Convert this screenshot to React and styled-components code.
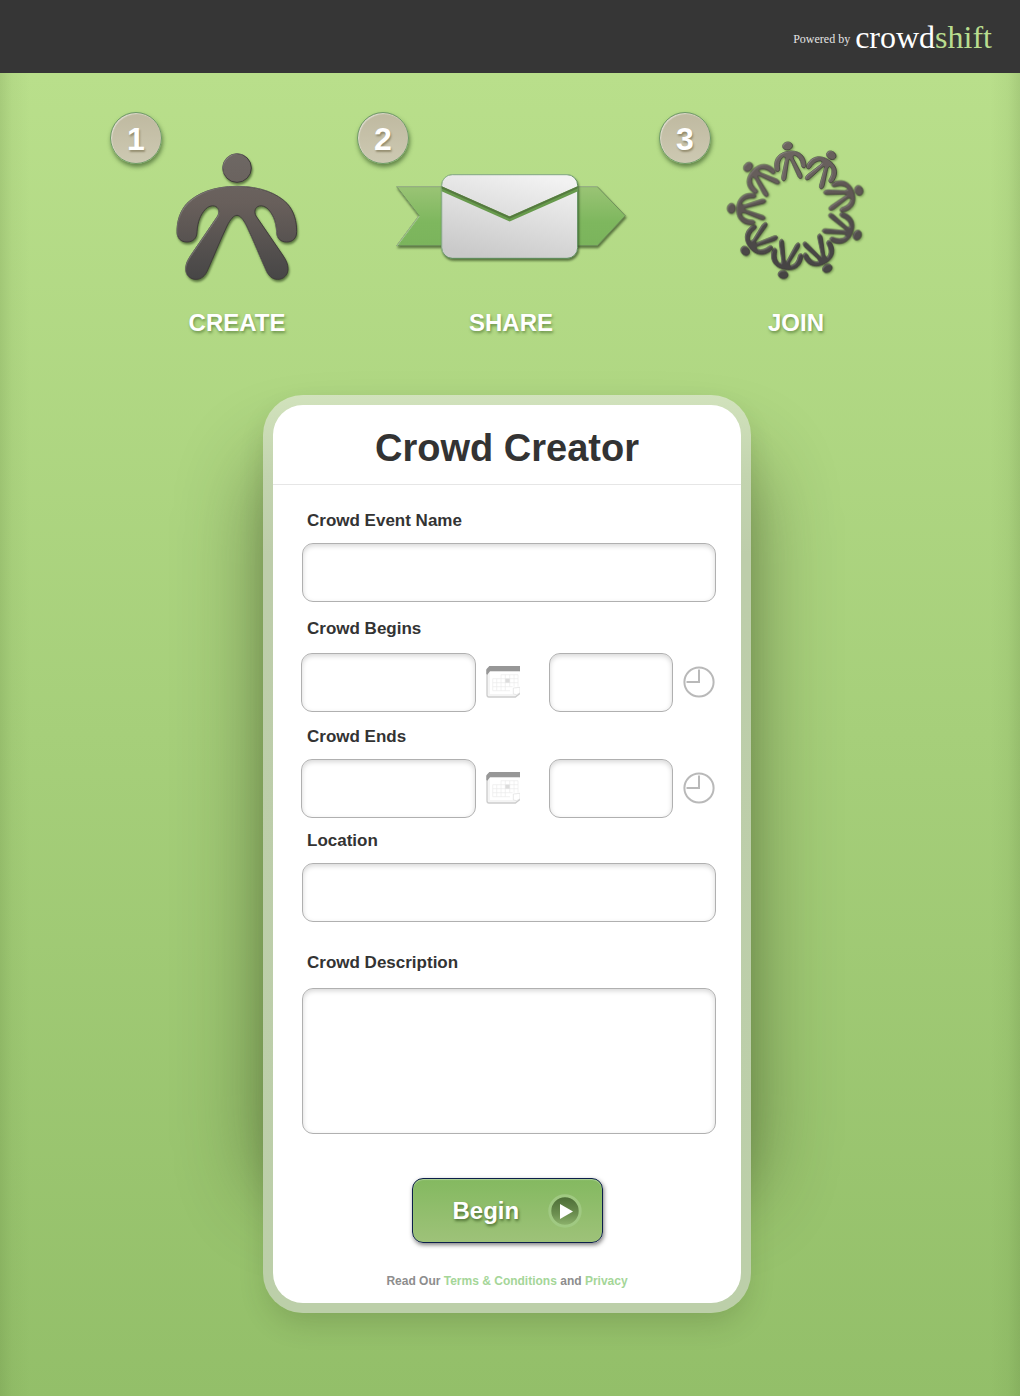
import React from "react";
import styled, { createGlobalStyle } from "styled-components";

const GlobalStyle = createGlobalStyle`
  * { box-sizing: border-box; }
  body {
    margin: 0;
    background: #93bf69;
    font-family: "Liberation Sans", Arial, Helvetica, sans-serif;
    color: #333;
  }
`;

const TopBar = styled.header`
  display: flex;
  justify-content: flex-end;
  align-items: center;
  gap: 5px;
  height: 73px;
  padding: 0 28px 0 0;
  background: #363636;
  color: #fff;
  font-family: "Liberation Serif", "Times New Roman", serif;
`;

const PoweredBy = styled.span`
  padding-top: 6px;
  font-size: 12px;
  color: #e4e4e4;
`;

const Brand = styled.a`
  font-size: 32px;
  line-height: 36px;
  color: #fff;
  text-decoration: none;
  span { color: #b9dd8f; }
`;

const Stage = styled.main`
  padding: 39px 6px 83px 0;
  background:
    linear-gradient(90deg, rgba(70, 100, 40, 0.16), rgba(70, 100, 40, 0.05) 12px, transparent 30px),
    linear-gradient(270deg, rgba(70, 100, 40, 0.16), rgba(70, 100, 40, 0.05) 12px, transparent 30px),
    linear-gradient(#b9df8b, #93bf69);
`;

const Steps = styled.ol`
  display: grid;
  grid-template-columns: 247px 302px 1fr;
  max-width: 794px;
  margin: 0 auto;
  padding: 0;
  list-style: none;
`;

const Step = styled.li`
  display: flex;
  align-items: flex-start;
`;

const Badge = styled.span`
  flex: none;
  width: 52px;
  height: 52px;
  border: 1px solid #6f9a68;
  border-radius: 50%;
  background: linear-gradient(#bfb9a0, #cdc9b2);
  box-shadow: 1px 3px 4px rgba(30, 60, 20, 0.55), inset 1px 1px 1px rgba(255, 255, 255, 0.45);
  color: #fff;
  font-size: 32px;
  font-weight: bold;
  line-height: 52px;
  text-align: center;
  text-shadow: 1px 2px 2px rgba(70, 60, 20, 0.4);
`;

const StepBody = styled.div`
  display: flex;
  flex-direction: column;
  align-items: center;
  margin-left: ${(p) => (p.$overlap ? "-16px" : "16px")};
`;

const StepArt = styled.svg`
  display: block;
  width: ${(p) => p.$width}px;
  height: 190px;
  overflow: visible;
`;

const StepTitle = styled.h2`
  margin: 7px 0 0;
  font-size: 24px;
  line-height: 28px;
  color: #fff;
  text-shadow: 1px 2px 3px rgba(40, 80, 20, 0.5);
`;

const Frame = styled.section`
  position: relative;
  isolation: isolate;
  width: 100%;
  max-width: 488px;
  margin: 58px auto 0;
  padding: 10px;
  border-radius: 40px;
  box-shadow: 0 14px 30px -6px rgba(40, 50, 20, 0.2);

  &::before {
    content: "";
    position: absolute;
    z-index: -2;
    inset: 70px 0 120px;
    border-radius: 40px;
    box-shadow: 0 0 80px 6px rgba(40, 50, 20, 0.44);
  }

  &::after {
    content: "";
    position: absolute;
    z-index: -1;
    inset: 0;
    border-radius: 40px;
    background: linear-gradient(#d1e2bc, #c3d4af 80px, #bdcdaa 160px, #bccfa9);
  }
`;

const Card = styled.form`
  border-radius: 30px;
  background: #fff;
`;

const CardTitle = styled.h1`
  margin: 0;
  padding-top: 21px;
  height: 80px;
  border-bottom: 1px solid #e6e6e6;
  font-size: 38px;
  line-height: 44px;
  text-align: center;
`;

const Fields = styled.div`
  padding: 26px 25px 0 29px;
`;

const Field = styled.div`
  display: flex;
  flex-direction: column;
  gap: ${(p) => p.$gap || 12}px;
  margin-top: ${(p) => p.$top || 0}px;
`;

const Label = styled.label`
  padding-left: 5px;
  font-size: 17px;
  font-weight: bold;
  line-height: 20px;
`;

const boxStyle = `
  display: block;
  width: 100%;
  border: 1px solid #b0b0b0;
  border-radius: 11px;
  background: #fff;
  box-shadow: inset 0 2px 5px rgba(0, 0, 0, 0.16);
  padding: 0 14px;
  font: inherit;
  font-size: 18px;
  color: #333;
  outline: none;
  &:focus { border-color: #7bae57; }
`;

const TextBox = styled.input`
  ${boxStyle}
  height: 59px;
`;

const TextArea = styled.textarea`
  ${boxStyle}
  height: 146px;
  padding: 14px;
  resize: none;
`;

const Split = styled.div`
  display: flex;
  justify-content: space-between;
  margin: 0 1px 0 -1px;
`;

const Picker = styled.div`
  display: flex;
  align-items: center;
  gap: 10px;
  width: ${(p) => p.$width}px;
`;

const IconButton = styled.button`
  flex: none;
  padding: 0 0 2px;
  border: 0;
  background: none;
  cursor: pointer;
  svg { display: block; }
`;

const BeginButton = styled.button`
  display: flex;
  align-items: center;
  justify-content: space-between;
  width: 191px;
  height: 65px;
  margin: 44px auto 0;
  padding: 0 20px 0 40px;
  border: 1px solid #0c1f4a;
  border-radius: 11px;
  background: linear-gradient(#84b960, #9ec279);
  box-shadow: 1px 2px 4px rgba(0, 0, 0, 0.5), inset 0 1px 1px rgba(255, 255, 255, 0.35);
  color: #fff;
  font: inherit;
  font-size: 24px;
  font-weight: bold;
  text-shadow: 1px 2px 3px rgba(30, 60, 10, 0.6);
  cursor: pointer;
`;

const Legal = styled.p`
  margin: 0;
  padding: 30px 0 14px;
  font-size: 12px;
  font-weight: bold;
  line-height: 16px;
  color: #8d8d8d;
  text-align: center;
  a { color: #a5d698; text-decoration: none; }
`;

const BODY =
  "M411 259C481 259 531 280 561 310C583 334 590 365 590 395C590 415 578 426 560 426C542 426 530 415 530 395C528 365 520 345 505 328C497 319 485 316 478 318C465 321 461 335 468 348L548 465C558 480 564 492 564 506C564 526 550 538 533 538C517 538 505 527 498 510C480 470 460 420 440 378C430 358 420 346 411 346C401 346 391 358 381 378C361 420 341 470 323 510C316 527 304 538 288 538C271 538 257 526 257 506C257 492 263 480 273 465L353 348C360 335 356 321 343 318C336 316 324 319 316 328C301 345 293 365 291 395C291 415 279 426 261 426C243 426 231 415 231 395C231 365 239 334 261 310C291 280 341 259 411 259Z";

const SMALL_BODY =
  "M0 -180C25 -180 47 -167 47 -137C47 -128 44 -124 40 -124C35 -124 33 -128 33 -134C33 -150 26 -161 17 -165C12 -166 11 -161 13 -154L30 -108C32 -100 30 -95 27 -94C23 -93 20 -96 18 -101L4 -149C2 -154 1 -156 0 -156C-1 -156 -2 -154 -4 -149L-18 -101C-20 -96 -23 -93 -27 -94C-30 -95 -32 -100 -30 -108L-13 -154C-11 -161 -12 -166 -17 -165C-26 -161 -33 -150 -33 -134C-33 -128 -35 -124 -40 -124C-44 -124 -47 -128 -47 -137C-47 -167 -25 -180 0 -180Z";

function Bevel({ id, depth = 4, light = 0.3, shade = 0.6 }) {
  return (
    <filter id={id} x="-20%" y="-20%" width="150%" height="150%" colorInterpolationFilters="sRGB">
      <feOffset in="SourceAlpha" dx={depth} dy={depth} result="inner" />
      <feComposite in="SourceAlpha" in2="inner" operator="out" result="rim" />
      <feGaussianBlur in="rim" stdDeviation="1.5" result="softRim" />
      <feFlood floodColor="#fff" floodOpacity={light} />
      <feComposite in2="softRim" operator="in" />
      <feComposite in2="SourceAlpha" operator="in" result="light" />
      <feGaussianBlur in="SourceAlpha" stdDeviation={depth - 0.5} />
      <feOffset dx={depth} dy={depth + 1} result="blur" />
      <feFlood floodColor="#1e3210" floodOpacity={shade} />
      <feComposite in2="blur" operator="in" result="shade" />
      <feMerge>
        <feMergeNode in="shade" />
        <feMergeNode in="SourceGraphic" />
        <feMergeNode in="light" />
      </feMerge>
    </filter>
  );
}

function PersonArt() {
  return (
    <StepArt $width={118} viewBox="234 36 354 570" aria-hidden="true">
      <defs>
        <Bevel id="personBevel" light={0.22} />
        <linearGradient id="personFill" gradientUnits="userSpaceOnUse" x1="0" y1="160" x2="0" y2="538">
          <stop offset="0" stopColor="#6e6864" />
          <stop offset="0.4" stopColor="#685f5b" />
          <stop offset="1" stopColor="#474646" />
        </linearGradient>
      </defs>
      <g filter="url(#personBevel)" fill="url(#personFill)" stroke="#3f3b3a" strokeWidth="3">
        <circle cx="411" cy="204" r="43" />
        <path d={BODY} />
      </g>
    </StepArt>
  );
}

function EnvelopeArt() {
  return (
    <StepArt $width={236} viewBox="129 36 708 570" aria-hidden="true">
      <defs>
        <Bevel id="mailBevel" />
        <linearGradient id="ribbonFill" x1="0" y1="0" x2="0" y2="1">
          <stop offset="0" stopColor="#9ac475" />
          <stop offset="0.6" stopColor="#7eb75e" />
          <stop offset="1" stopColor="#7bb45c" />
        </linearGradient>
        <linearGradient id="paperFill" x1="0.7" y1="0" x2="0.3" y2="1">
          <stop offset="0" stopColor="#f2f2f2" />
          <stop offset="1" stopColor="#c9c9c9" />
        </linearGradient>
        <clipPath id="paperClip">
          <rect x="275" y="224" width="408" height="251" rx="32" />
        </clipPath>
      </defs>
      <g filter="url(#mailBevel)">
        <path d="M140 260H742L826 347L742 437H140L207 347Z" fill="url(#ribbonFill)" stroke="#6d8f58" strokeWidth="3" />
      </g>
      <g filter="url(#mailBevel)">
        <rect x="275" y="224" width="408" height="251" rx="32" fill="url(#paperFill)" stroke="#5d8f5c" strokeWidth="3" />
      </g>
      <g clipPath="url(#paperClip)" fill="none">
        <path d="M270 264L479 357L688 264" stroke="#679a4c" strokeWidth="14" />
        <path d="M270 260L479 353L688 260" stroke="#55793f" strokeWidth="6" />
      </g>
    </StepArt>
  );
}

const RING = [
  ["#6c6460", -8], ["#68605d", 32], ["#605855", 72], ["#524e4d", 112], ["#484646", 152],
  ["#464444", 192], ["#4b4847", 232], ["#5c5552", 272], ["#665e5b", 312],
];

function CrowdArt() {
  return (
    <StepArt $width={138} viewBox="231 36 414 570" aria-hidden="true">
      <defs>
        <Bevel id="crowdBevel" depth={3} light={0.22} shade={0.45} />
      </defs>
      <g filter="url(#crowdBevel)" stroke="#3b3736" strokeWidth="2">
        {RING.map(([fill, angle]) => (
          <g key={angle} fill={fill} transform={`translate(440 332) rotate(${angle})`}>
            <ellipse cx="0" cy="-196" rx="15" ry="12" />
            <path d={SMALL_BODY} />
          </g>
        ))}
      </g>
    </StepArt>
  );
}

function CalendarIcon() {
  return (
    <svg width="34" height="32" viewBox="0 0 102 96" aria-hidden="true">
      <path d="M3 14V86Q3 93 9 93H88L102 82V14Z" fill="#f4f4f4" stroke="#cdcdcd" strokeWidth="4" />
      <path d="M12 16H102V78L90 84H12Z" fill="#fff" />
      <path d="M20 38H96M20 50H96M20 62H80M20 74H72M20 38V74M32 38V74M45 26V74M58 26V74M71 26V62M84 26V62M96 26V62M45 26H96" stroke="#ececec" strokeWidth="2" fill="none" />
      <rect x="58" y="38" width="13" height="12" fill="#dcdcdc" />
      <path d="M82 66L102 64V80L92 86L82 84Z" fill="#fff" stroke="#dedede" strokeWidth="2" />
      <path d="M10 0H102V16H12L4 26L1 24V10Z" fill="#979797" />
    </svg>
  );
}

function ClockIcon() {
  return (
    <svg width="32" height="32" viewBox="0 0 32 32" fill="none" stroke="#b9b9b9" strokeWidth="2" aria-hidden="true">
      <circle cx="16" cy="16" r="14.6" />
      <path d="M16 3.5V16H3.5" />
    </svg>
  );
}

function PlayIcon() {
  return (
    <svg width="34" height="34" viewBox="0 0 34 34" aria-hidden="true">
      <defs>
        <linearGradient id="playFill" x1="0" y1="0" x2="0" y2="1">
          <stop offset="0" stopColor="#4a6a35" />
          <stop offset="0.6" stopColor="#6c8f50" />
          <stop offset="1" stopColor="#8fb56e" />
        </linearGradient>
      </defs>
      <circle cx="17" cy="17" r="15.2" fill="url(#playFill)" stroke="#a0c982" strokeWidth="3" />
      <path d="M12 10L25 17.5L12 25Z" fill="#fff" />
    </svg>
  );
}

function DateTimeField({ id, label, top, gap }) {
  return (
    <Field $top={top} $gap={gap}>
      <Label htmlFor={`${id}-date`}>{label}</Label>
      <Split>
        <Picker $width={219}>
          <TextBox id={`${id}-date`} type="text" />
          <IconButton type="button" aria-label={`${label}: choose date`}><CalendarIcon /></IconButton>
        </Picker>
        <Picker $width={166}>
          <TextBox id={`${id}-time`} type="text" aria-label={`${label}: time`} />
          <IconButton type="button" aria-label={`${label}: choose time`}><ClockIcon /></IconButton>
        </Picker>
      </Split>
    </Field>
  );
}

export default function App() {
  return (
    <>
      <GlobalStyle />
      <TopBar>
        <PoweredBy>Powered by</PoweredBy>
        <Brand href="#">crowd<span>shift</span></Brand>
      </TopBar>
      <Stage>
        <Steps>
          <Step>
            <Badge>1</Badge>
            <StepBody><PersonArt /><StepTitle>CREATE</StepTitle></StepBody>
          </Step>
          <Step>
            <Badge>2</Badge>
            <StepBody $overlap><EnvelopeArt /><StepTitle>SHARE</StepTitle></StepBody>
          </Step>
          <Step>
            <Badge>3</Badge>
            <StepBody><CrowdArt /><StepTitle>JOIN</StepTitle></StepBody>
          </Step>
        </Steps>
        <Frame>
          <Card onSubmit={(e) => e.preventDefault()}>
            <CardTitle>Crowd Creator</CardTitle>
            <Fields>
              <Field>
                <Label htmlFor="event-name">Crowd Event Name</Label>
                <TextBox id="event-name" type="text" />
              </Field>
              <DateTimeField id="begins" label="Crowd Begins" top={17} gap={14} />
              <DateTimeField id="ends" label="Crowd Ends" top={15} />
              <Field $top={13}>
                <Label htmlFor="location">Location</Label>
                <TextBox id="location" type="text" />
              </Field>
              <Field $top={31} $gap={15}>
                <Label htmlFor="description">Crowd Description</Label>
                <TextArea id="description" />
              </Field>
            </Fields>
            <BeginButton type="submit">Begin<PlayIcon /></BeginButton>
            <Legal>
              Read Our <a href="#">Terms &amp; Conditions</a> and <a href="#">Privacy</a>
            </Legal>
          </Card>
        </Frame>
      </Stage>
    </>
  );
}
